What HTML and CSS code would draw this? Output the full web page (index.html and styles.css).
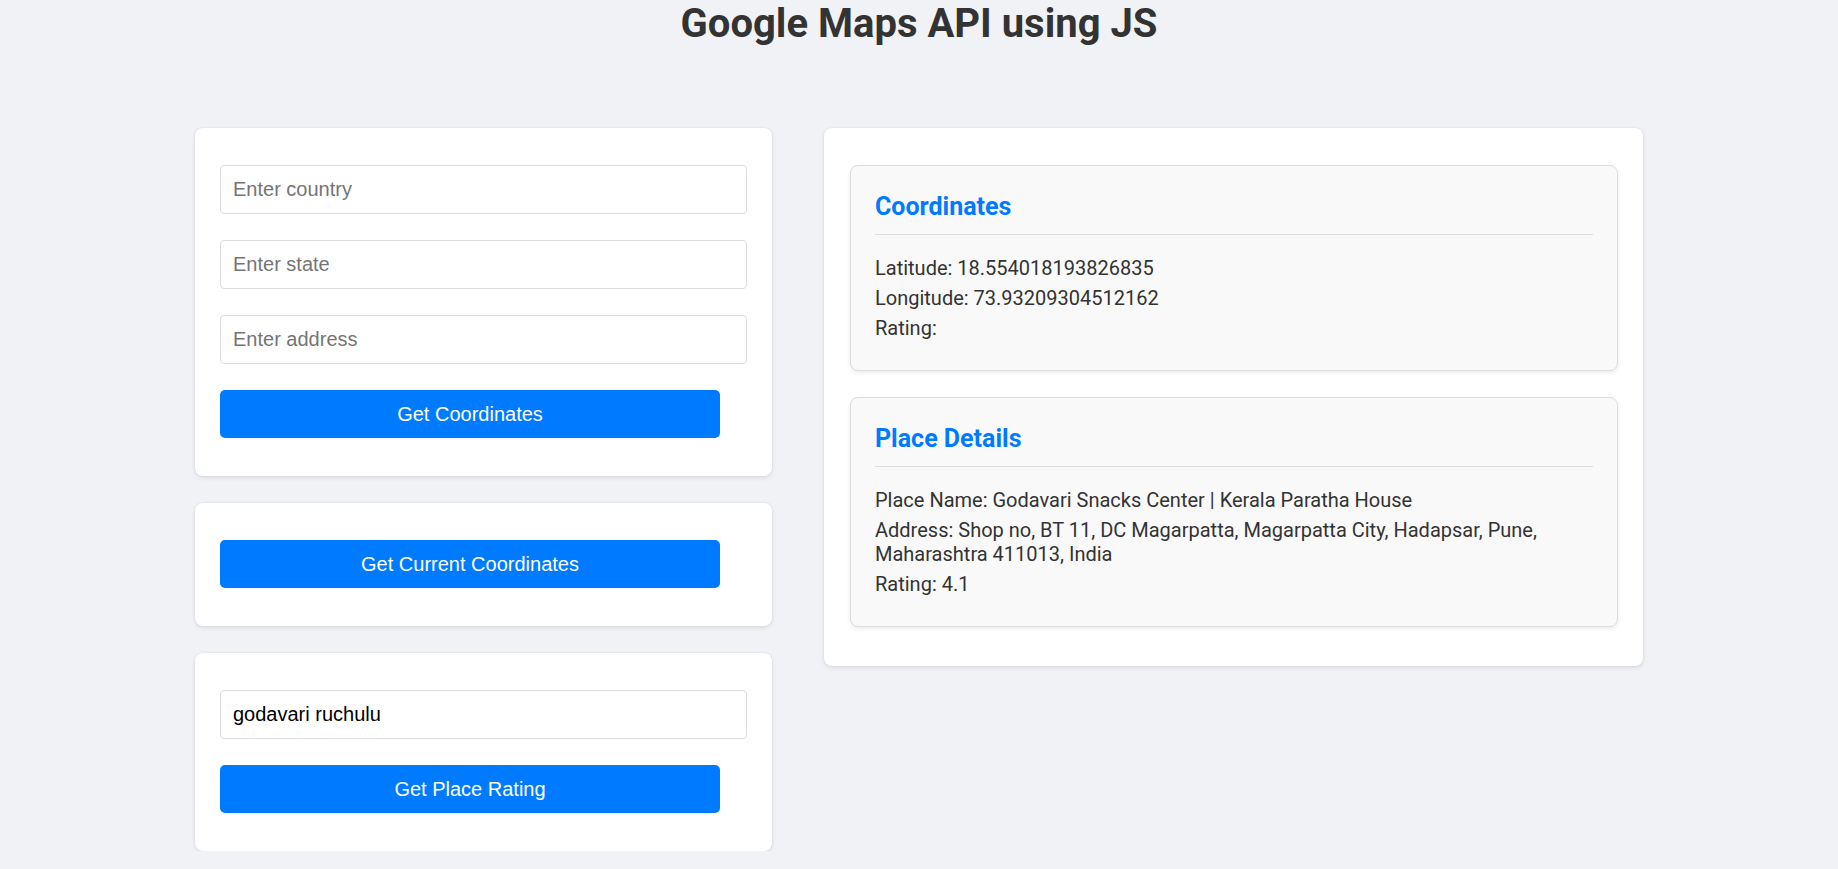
FILE: index.html
```html
<!DOCTYPE html>
<html lang="en">
<head>
<meta charset="UTF-8">
<title>Google Maps API using JS</title>
<link rel="stylesheet" href="styles.css">
</head>
<body>
  <h1 class="page-title">Google Maps API using JS</h1>
  <main class="layout">
    <section class="column">
      <div class="card">
        <input class="field" type="text" placeholder="Enter country">
        <input class="field" type="text" placeholder="Enter state">
        <input class="field" type="text" placeholder="Enter address">
        <button class="btn">Get Coordinates</button>
      </div>
      <div class="card">
        <button class="btn">Get Current Coordinates</button>
      </div>
      <div class="card">
        <input class="field" type="text" placeholder="Enter place" value="godavari ruchulu">
        <button class="btn">Get Place Rating</button>
      </div>
    </section>
    <section class="card results">
      <div class="result">
        <h3 class="result-title">Coordinates</h3>
        <p>Latitude: 18.554018193826835</p>
        <p>Longitude: 73.93209304512162</p>
        <p>Rating: </p>
      </div>
      <div class="result">
        <h3 class="result-title">Place Details</h3>
        <p>Place Name: Godavari Snacks Center | Kerala Paratha House</p>
        <p>Address: Shop no, BT 11, DC Magarpatta, Magarpatta City, Hadapsar, Pune, Maharashtra 411013, India</p>
        <p>Rating: 4.1</p>
      </div>
    </section>
  </main>
</body>
</html>
```

FILE: styles.css
```css
* {
  box-sizing: border-box;
}

body {
  margin: 0;
  background: #f0f2f5;
  font-family: Roboto, "Liberation Sans", Arial, sans-serif;
  color: #333;
}

.page-title {
  margin: 0;
  text-align: center;
  font-size: 40px;
  font-weight: 700;
  color: #333;
  line-height: normal;
}

.layout {
  display: flex;
  justify-content: center;
  align-items: flex-start;
  gap: 52px;
  margin-top: 81px;
}

.column {
  width: 577px;
  display: flex;
  flex-direction: column;
  gap: 27px;
}

.card {
  background: #fff;
  border-radius: 8px;
  box-shadow: 0 0 3px rgba(0, 0, 0, 0.08), 0 2px 5px rgba(0, 0, 0, 0.08);
  padding: 37px 25px 38px;
}

.field {
  display: block;
  width: 100%;
  height: 49px;
  margin: 0 0 26px;
  padding: 12px;
  border: 1px solid #ddd;
  border-radius: 4px;
  background: #fff;
  font-family: "Liberation Sans", Arial, sans-serif;
  font-size: 20px;
  color: #000;
}

.field::placeholder {
  color: #757575;
}

.btn {
  display: block;
  width: 500px;
  height: 48px;
  padding: 12px;
  border: none;
  border-radius: 5px;
  background: #007bff;
  color: #fff;
  font-family: "Liberation Sans", Arial, sans-serif;
  font-size: 20px;
  line-height: 24px;
  cursor: pointer;
}

.results {
  width: 819px;
  display: flex;
  flex-direction: column;
  gap: 26px;
  padding: 37px 25px 39px 26px;
}

.result {
  background: #f9f9f9;
  border: 1px solid #ddd;
  border-radius: 8px;
  box-shadow: 0 2px 4px rgba(0, 0, 0, 0.08);
  padding: 26px 24px 24px;
}

.result-title {
  margin: 0 0 21px;
  padding-bottom: 13px;
  border-bottom: 1px solid #ddd;
  font-size: 25px;
  font-weight: 700;
  color: #007bff;
  line-height: normal;
}

.result p {
  margin: 6px 0;
  font-size: 20px;
  line-height: 24px;
  color: #333;
}
```
